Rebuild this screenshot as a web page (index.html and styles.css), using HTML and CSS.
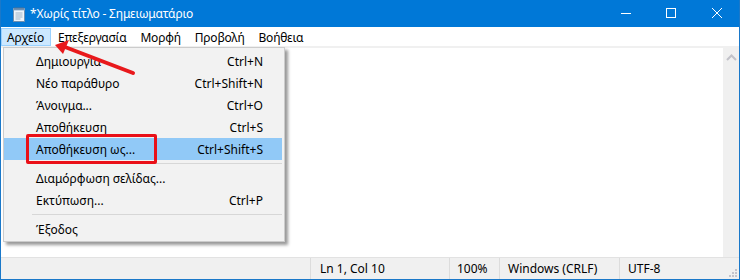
FILE: index.html
```html
<!DOCTYPE html>
<html lang="el">
<head>
    <meta charset="UTF-8">
    <title>*Χωρίς τίτλο - Σημειωματάριο</title>
    <link rel="stylesheet" href="styles.css">
</head>
<body>
    <div class="window">
        <div class="titlebar">
            <svg class="app-icon" width="14" height="16" viewBox="0 0 14 16">
                <rect x="1.5" y="2.5" width="11" height="13" fill="#eef4fa" stroke="#6d8fb0"/>
                <rect x="1.5" y="2.5" width="11" height="2" fill="#8fb4d6"/>
                <path d="M3 1v3M5 1v3M7 1v3M9 1v3M11 1v3" stroke="#4d6f91"/>
                <path d="M3.5 7h7M3.5 9h7M3.5 11h7M3.5 13h5" stroke="#9db4c8"/>
            </svg>
            <span class="title">*Χωρίς τίτλο - Σημειωματάριο</span>
            <div class="controls">
                <span class="ctl"><svg width="10" height="10" viewBox="0 0 10 10"><path d="M0 5.5h10" stroke="#fff"/></svg></span>
                <span class="ctl"><svg width="10" height="10" viewBox="0 0 10 10"><rect x="0.5" y="0.5" width="9" height="9" fill="none" stroke="#fff"/></svg></span>
                <span class="ctl"><svg width="10" height="10" viewBox="0 0 10 10"><path d="M0 0L10 10M10 0L0 10" stroke="#fff"/></svg></span>
            </div>
        </div>
        <div class="menubar">
            <span class="menu-item active">Αρχείο</span>
            <span class="menu-item">Επεξεργασία</span>
            <span class="menu-item">Μορφή</span>
            <span class="menu-item">Προβολή</span>
            <span class="menu-item">Βοήθεια</span>
        </div>
        <div class="content">
            <div class="editor"></div>
            <div class="vscroll">
                <svg width="11" height="7" viewBox="0 0 11 7"><path d="M1 6l4.5-4.5L10 6" fill="none" stroke="#c2c2c9" stroke-width="2"/></svg>
            </div>
        </div>
        <div class="statusbar">
            <span class="cell grow"></span>
            <span class="cell pos">Ln 1, Col 10</span>
            <span class="cell zoom">100%</span>
            <span class="cell eol">Windows (CRLF)</span>
            <span class="cell enc">UTF-8
                <svg class="grip" width="10" height="10" viewBox="0 0 10 10" fill="#c4c4cc">
                    <rect x="7" y="1" width="2" height="2"/>
                    <rect x="4" y="4" width="2" height="2"/><rect x="7" y="4" width="2" height="2"/>
                    <rect x="1" y="7" width="2" height="2"/><rect x="4" y="7" width="2" height="2"/><rect x="7" y="7" width="2" height="2"/>
                </svg>
            </span>
        </div>

        <div class="dropdown">
            <div class="entry"><span>Δημιουργία</span><span>Ctrl+N</span></div>
            <div class="entry"><span>Νέο παράθυρο</span><span>Ctrl+Shift+N</span></div>
            <div class="entry"><span>Άνοιγμα...</span><span>Ctrl+O</span></div>
            <div class="entry"><span>Αποθήκευση</span><span>Ctrl+S</span></div>
            <div class="entry selected"><span>Αποθήκευση ως...</span><span>Ctrl+Shift+S</span></div>
            <div class="sep"></div>
            <div class="entry"><span>Διαμόρφωση σελίδας...</span><span></span></div>
            <div class="entry"><span>Εκτύπωση...</span><span>Ctrl+P</span></div>
            <div class="sep"></div>
            <div class="entry"><span>Έξοδος</span><span></span></div>
        </div>

        <div class="mark"></div>
        <svg class="arrow" width="100" height="45" viewBox="0 0 100 45">
            <path d="M92 35L24 9" stroke="#e8191c" stroke-width="4" stroke-linecap="round"/>
            <path d="M14 7L28 2L22 16Z" fill="#e8191c"/>
        </svg>
    </div>
</body>
</html>
```

FILE: styles.css
```css
*{
    margin: 0;
    padding: 0;
    box-sizing: border-box;
}

body{
    font-family: "Noto Sans", "Open Sans", sans-serif;
    font-size: 12px;
    color: #000;
    background: #fff;
}

.window{
    position: relative;
    width: 740px;
    height: 280px;
    display: flex;
    flex-direction: column;
    border: 1px solid #1a78c9;
    border-top: none;
    overflow: hidden;
}

.titlebar{
    height: 27px;
    background: #0078d7;
    color: #fff;
    display: flex;
    align-items: center;
    margin: 0 -1px;
}

.app-icon{
    margin-left: 12px;
    margin-right: 4px;
}

.title{
    font-size: 12px;
    letter-spacing: -0.2px;
    flex: 1;
}

.controls{
    display: flex;
    align-self: stretch;
}

.ctl{
    width: 45px;
    display: flex;
    align-items: center;
    justify-content: center;
    margin-top: -1px;
}

.ctl:last-child{
    width: 47px;
}

.menubar{
    display: flex;
    align-items: stretch;
    padding-top: 1px;
    border-bottom: 2px solid #f0f0f0;
    height: 21px;
    letter-spacing: -0.2px;
}

.menu-item{
    padding: 0 6px;
    line-height: 17px;
    border: 1px solid transparent;
}

.menu-item.active{
    background: #cce8ff;
    border-color: #99d1ff;
    padding-left: 5px;
}

.content{
    flex: 1;
    display: flex;
}

.editor{
    flex: 1;
    background: #fff;
}

.vscroll{
    width: 16px;
    background: #f0f0f0;
    display: flex;
    justify-content: center;
    padding-top: 6px;
}

.statusbar{
    height: 22px;
    background: #f0f0f0;
    border-top: 1px solid #e2e2e2;
    display: flex;
    align-items: stretch;
}

.cell{
    display: flex;
    align-items: center;
    padding-left: 9px;
    border-left: 1px solid #dcdcdc;
}

.cell.grow{
    flex: none;
    width: 309px;
    border-left: none;
}

.pos{ width: 139px; }
.zoom{ width: 50px; padding-left: 7px; }
.eol{ width: 120px; padding-left: 8px; }

.enc{
    flex: 1;
    padding-left: 8px;
    position: relative;
}

.grip{
    position: absolute;
    right: 1px;
    bottom: 1px;
}

.dropdown{
    position: absolute;
    left: 2px;
    top: 47px;
    width: 282px;
    background: #f2f2f2;
    border: 1px solid #cccccc;
    box-shadow: 3px 3px 3px rgba(0, 0, 0, 0.4);
    padding: 2px 2px 1px 0;
}

.entry{
    height: 22px;
    display: flex;
    justify-content: space-between;
    align-items: center;
    padding: 0 19px 0 32px;
}

.entry.selected{
    background: #91c9f7;
}

.sep{
    height: 7px;
    margin-left: 28px;
    padding-top: 3px;
}

.sep::after{
    content: "";
    display: block;
    height: 1px;
    background: #d7d7d7;
}

.mark{
    position: absolute;
    left: 25px;
    top: 134px;
    width: 131px;
    height: 30px;
    border: 3px solid #ea1018;
    border-radius: 2px;
}

.arrow{
    position: absolute;
    left: 40px;
    top: 38px;
}
```
